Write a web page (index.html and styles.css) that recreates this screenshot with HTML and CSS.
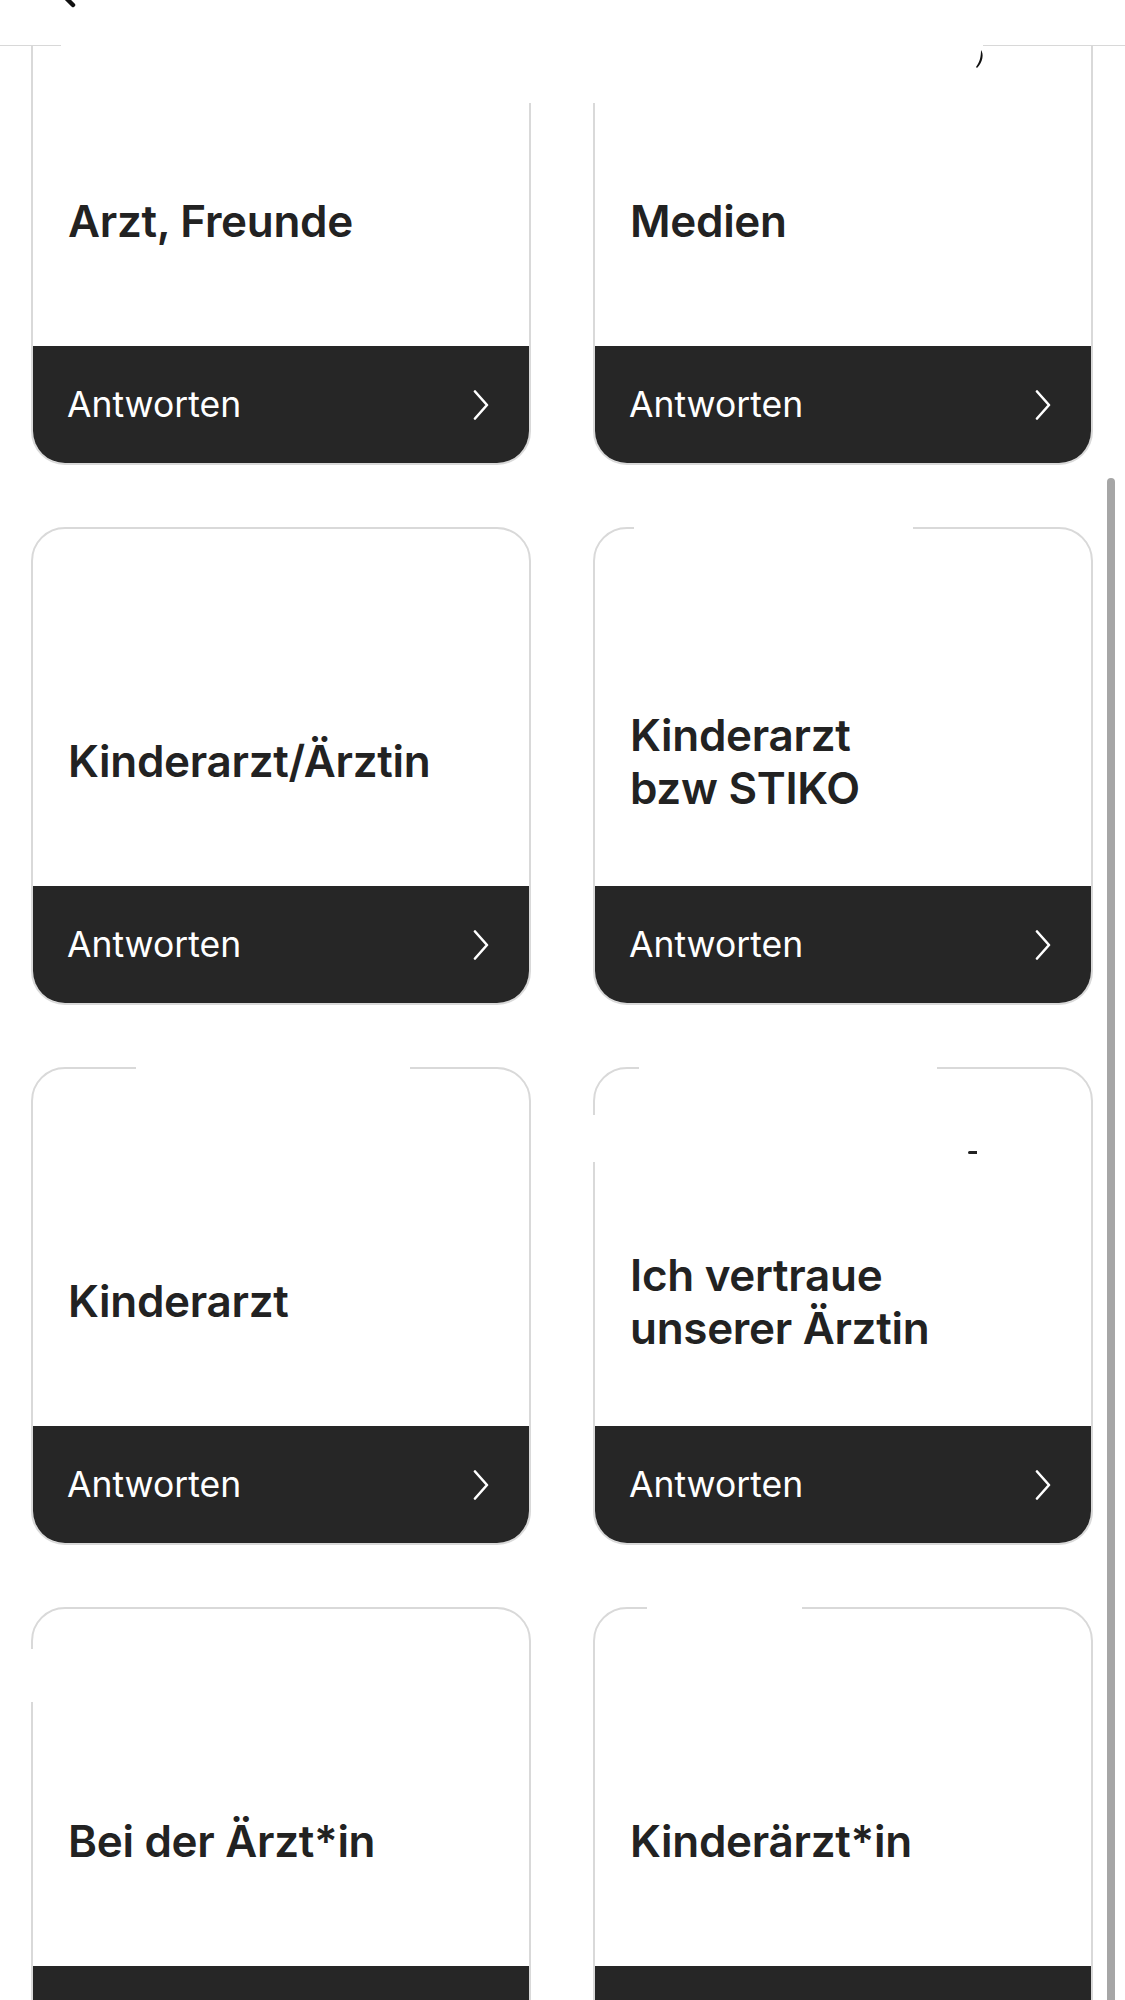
FILE: index.html
```html
<!DOCTYPE html>
<html lang="de">
<head>
<meta charset="utf-8">
<title>Antworten</title>
<link rel="stylesheet" href="styles.css">
</head>
<body>
<header class="topbar">
  <svg class="back" width="40" height="40" viewBox="0 0 40 40"><path d="M28 2 L12 18 L28 34" fill="none" stroke="#111" stroke-width="4.5" stroke-linecap="round" stroke-linejoin="round"/></svg>
</header>
<div class="glitch glitch-top"></div>
<svg class="frag frag-top" width="12" height="20" viewBox="0 0 12 20"><path d="M6 0 C9 4 8 12 2 18 L1 17 C5 12 6 6 6 0 Z" fill="#111"/></svg>

<main class="grid">
  <article class="card">
    <div class="media"></div>
    <h2 class="title">Arzt, Freunde</h2>
    <a class="action"><span>Antworten</span><svg width="16" height="30" viewBox="0 0 16 30"><path d="M2 1.5 L14 15 L2 28.5" fill="none" stroke="#fff" stroke-width="2.6" stroke-linecap="round" stroke-linejoin="round"/></svg></a>
  </article>
  <article class="card">
    <div class="media"></div>
    <h2 class="title">Medien</h2>
    <a class="action"><span>Antworten</span><svg width="16" height="30" viewBox="0 0 16 30"><path d="M2 1.5 L14 15 L2 28.5" fill="none" stroke="#fff" stroke-width="2.6" stroke-linecap="round" stroke-linejoin="round"/></svg></a>
  </article>

  <article class="card">
    <div class="media"></div>
    <h2 class="title">Kinderarzt/Ärztin</h2>
    <a class="action"><span>Antworten</span><svg width="16" height="30" viewBox="0 0 16 30"><path d="M2 1.5 L14 15 L2 28.5" fill="none" stroke="#fff" stroke-width="2.6" stroke-linecap="round" stroke-linejoin="round"/></svg></a>
  </article>
  <article class="card">
    <div class="media"></div>
    <div class="cover cover-r2"></div>
    <h2 class="title">Kinderarzt<br>bzw STIKO</h2>
    <a class="action"><span>Antworten</span><svg width="16" height="30" viewBox="0 0 16 30"><path d="M2 1.5 L14 15 L2 28.5" fill="none" stroke="#fff" stroke-width="2.6" stroke-linecap="round" stroke-linejoin="round"/></svg></a>
  </article>

  <article class="card">
    <div class="media"></div>
    <div class="cover cover-r3l"></div>
    <h2 class="title">Kinderarzt</h2>
    <a class="action"><span>Antworten</span><svg width="16" height="30" viewBox="0 0 16 30"><path d="M2 1.5 L14 15 L2 28.5" fill="none" stroke="#fff" stroke-width="2.6" stroke-linecap="round" stroke-linejoin="round"/></svg></a>
  </article>
  <article class="card">
    <div class="media"></div>
    <div class="cover cover-r3r"></div>
    <div class="cover cover-r3r-side"></div>
    <span class="frag frag-dash"></span>
    <h2 class="title">Ich vertraue<br>unserer Ärztin</h2>
    <a class="action"><span>Antworten</span><svg width="16" height="30" viewBox="0 0 16 30"><path d="M2 1.5 L14 15 L2 28.5" fill="none" stroke="#fff" stroke-width="2.6" stroke-linecap="round" stroke-linejoin="round"/></svg></a>
  </article>

  <article class="card">
    <div class="media"></div>
    <div class="cover cover-r4l-side"></div>
    <h2 class="title">Bei der Ärzt*in</h2>
    <a class="action"><span>Antworten</span><svg width="16" height="30" viewBox="0 0 16 30"><path d="M2 1.5 L14 15 L2 28.5" fill="none" stroke="#fff" stroke-width="2.6" stroke-linecap="round" stroke-linejoin="round"/></svg></a>
  </article>
  <article class="card">
    <div class="media"></div>
    <div class="cover cover-r4r"></div>
    <h2 class="title">Kinderärzt*in</h2>
    <a class="action"><span>Antworten</span><svg width="16" height="30" viewBox="0 0 16 30"><path d="M2 1.5 L14 15 L2 28.5" fill="none" stroke="#fff" stroke-width="2.6" stroke-linecap="round" stroke-linejoin="round"/></svg></a>
  </article>
</main>

<div class="scrollbar"></div>
</body>
</html>
```

FILE: styles.css
```css
html, body {
  margin: 0;
  padding: 0;
  background: #fff;
  overflow: hidden;
  height: 2000px;
}

body {
  font-family: Inter, "Noto Sans", "Liberation Sans", sans-serif;
  color: #222;
  position: relative;
}

.topbar {
  position: fixed;
  top: 0;
  left: 0;
  right: 0;
  height: 46px;
  background: #fff;
  border-bottom: 1px solid #d8d8d8;
  box-sizing: border-box;
  z-index: 5;
}

.back {
  position: absolute;
  left: 45px;
  top: -29px;
}

.glitch-top {
  position: absolute;
  left: 61px;
  top: 44px;
  width: 922px;
  height: 59px;
  background: #fff;
  z-index: 6;
}

.frag-top {
  position: absolute;
  left: 975px;
  top: 50px;
  z-index: 7;
}

.grid {
  display: grid;
  grid-template-columns: 500px 500px;
  column-gap: 62px;
  row-gap: 62px;
  padding-left: 31px;
  margin-top: -13px;
}

.card {
  position: relative;
  height: 478px;
  box-sizing: border-box;
  border: 2px solid #d9d9d9;
  border-radius: 34px;
  display: flex;
  flex-direction: column;
  background: #fff;
}

.media {
  height: 108px;
  flex: none;
}

.title {
  flex: 1;
  margin: 0;
  padding: 0 30px 0 35px;
  display: flex;
  align-items: center;
  font-size: 44px;
  line-height: 53px;
  font-weight: 600;
  color: #222;
  letter-spacing: -0.3px;
}

.action {
  flex: none;
  height: 117px;
  background: #262626;
  border-radius: 0 0 32px 32px;
  display: flex;
  align-items: center;
  justify-content: space-between;
  padding: 0 40px 0 34px;
  color: #fff;
  font-size: 35.5px;
  font-weight: 400;
}

.action svg {
  display: block;
}

.cover {
  position: absolute;
  background: #fff;
}

.cover-r2 {
  left: 39px;
  top: -4px;
  width: 279px;
  height: 8px;
}

.cover-r3l {
  left: 103px;
  top: -4px;
  width: 274px;
  height: 8px;
}

.cover-r3r {
  left: 44px;
  top: -4px;
  width: 298px;
  height: 8px;
}

.cover-r3r-side {
  left: -4px;
  top: 46px;
  width: 8px;
  height: 47px;
}

.cover-r4l-side {
  left: -4px;
  top: 40px;
  width: 8px;
  height: 53px;
}

.cover-r4r {
  left: 52px;
  top: -4px;
  width: 155px;
  height: 8px;
}

.frag-dash {
  position: absolute;
  left: 373px;
  top: 82px;
  width: 9px;
  height: 3px;
  background: #222;
  border-radius: 2px 0 0 2px;
}

.scrollbar {
  position: absolute;
  left: 1107px;
  top: 478px;
  width: 8px;
  height: 1540px;
  background: #a6a6a6;
  border-radius: 4px;
  z-index: 8;
}
```
